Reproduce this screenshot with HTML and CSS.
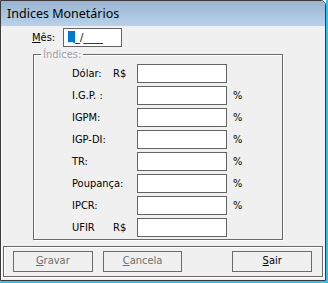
FILE: index.html
```html
<!DOCTYPE html>
<html lang="pt">
<head>
    <meta charset="UTF-8">
    <title>Indices Monetários</title>
    <link rel="stylesheet" href="styles.css">
</head>
<body>
<div class="window">
    <div class="frame">
        <div class="titlebar">Indices Monetários</div>
        <div class="client">
            <div class="mes-row">
                <label class="mes-label"><u>M</u>ês:</label>
                <div class="mes-input"><span class="sel">_</span>_/____</div>
            </div>

            <fieldset class="group">
                <legend>Índices:</legend>
                <div class="row">
                    <span class="lbl">Dólar:</span><span class="cur">R$</span>
                    <span class="box"></span>
                </div>
                <div class="row">
                    <span class="lbl wide">I.G.P. :</span>
                    <span class="box"></span><span class="pct">%</span>
                </div>
                <div class="row">
                    <span class="lbl wide">IGPM:</span>
                    <span class="box"></span><span class="pct">%</span>
                </div>
                <div class="row">
                    <span class="lbl wide">IGP-DI:</span>
                    <span class="box"></span><span class="pct">%</span>
                </div>
                <div class="row">
                    <span class="lbl wide">TR:</span>
                    <span class="box"></span><span class="pct">%</span>
                </div>
                <div class="row">
                    <span class="lbl wide">Poupança:</span>
                    <span class="box"></span><span class="pct">%</span>
                </div>
                <div class="row">
                    <span class="lbl wide">IPCR:</span>
                    <span class="box"></span><span class="pct">%</span>
                </div>
                <div class="row">
                    <span class="lbl">UFIR</span><span class="cur">R$</span>
                    <span class="box"></span>
                </div>
            </fieldset>

            <div class="buttons">
                <div class="btn off"><u>G</u>ravar</div>
                <div class="btn off"><u>C</u>ancela</div>
                <div class="btn sair"><u>S</u>air</div>
            </div>
        </div>
    </div>
</div>
</body>
</html>
```

FILE: styles.css
```css
*{
    margin: 0;
    padding: 0;
    box-sizing: border-box;
}
body{
    background: #fff;
    font-family: "DejaVu Sans Condensed", "DejaVu Sans", sans-serif;
    font-size: 11px;
    color: #000;
}
.window{
    width: 328px;
    height: 283px;
    border-right: 2px solid #2ec4ef;
    border-bottom: 2px solid #2ec4ef;
}
.frame{
    width: 326px;
    height: 281px;
    border: 1px solid #3a3a3a;
    border-top-right-radius: 5px;
    background: #f0f0f0;
    overflow: hidden;
}
.titlebar{
    height: 25px;
    padding: 4px 0 0 6px;
    background: linear-gradient(#99b4d1, #b9d1ea);
    font-family: "Noto Sans", sans-serif;
    font-size: 12.5px;
    line-height: 17px;
}
.client{
    height: 254px;
    box-shadow: inset 1px 0 0 #fff;
}
.mes-row{
    display: flex;
    align-items: center;
    height: 19px;
    margin-top: 2px;
    padding-left: 31px;
}
.mes-label{
    width: 31px;
}
.mes-input{
    width: 59px;
    height: 19px;
    border: 1px solid #646464;
    background: #fff;
    padding: 2px 0 0 4px;
    line-height: 13px;
}
.sel{
    display: inline-block;
    width: 7px;
    height: 12px;
    background: #0078d7;
    color: #fff;
    line-height: 11px;
    vertical-align: top;
}
.group{
    width: 250px;
    height: 192px;
    margin: 1px 0 0 32px;
    border: 1px solid #696969;
    box-shadow: inset 1px 1px 0 #fff, 1px 1px 0 #fff;
    padding: 3px 0 0 38px;
}
.group legend{
    margin-left: -31px;
    padding: 0 2px;
    height: 13px;
    line-height: 13px;
    color: #a0a0a0;
}
.row{
    display: grid;
    grid-template-columns: 41px 24px 90px auto;
    align-items: center;
    height: 19px;
    margin-bottom: 3px;
}
.lbl.wide{
    grid-column: span 2;
}
.box{
    height: 19px;
    border: 1px solid #646464;
    background: #fff;
}
.pct{
    padding-left: 6px;
}
.buttons{
    display: flex;
    width: 320px;
    height: 31px;
    margin: 6px 0 0 2px;
    border: 1px solid #696969;
    box-shadow: inset 1px 1px 0 #fff, 1px 1px 0 #fff;
    padding: 4px 0 0 9px;
}
.btn{
    width: 80px;
    height: 21px;
    margin-right: 10px;
    border: 1px solid #6b6b6b;
    background: #f0f0f0;
    text-align: center;
    line-height: 18px;
}
.btn.off{
    color: #6d6d6d;
}
.btn.sair{
    margin-left: 40px;
}
```
